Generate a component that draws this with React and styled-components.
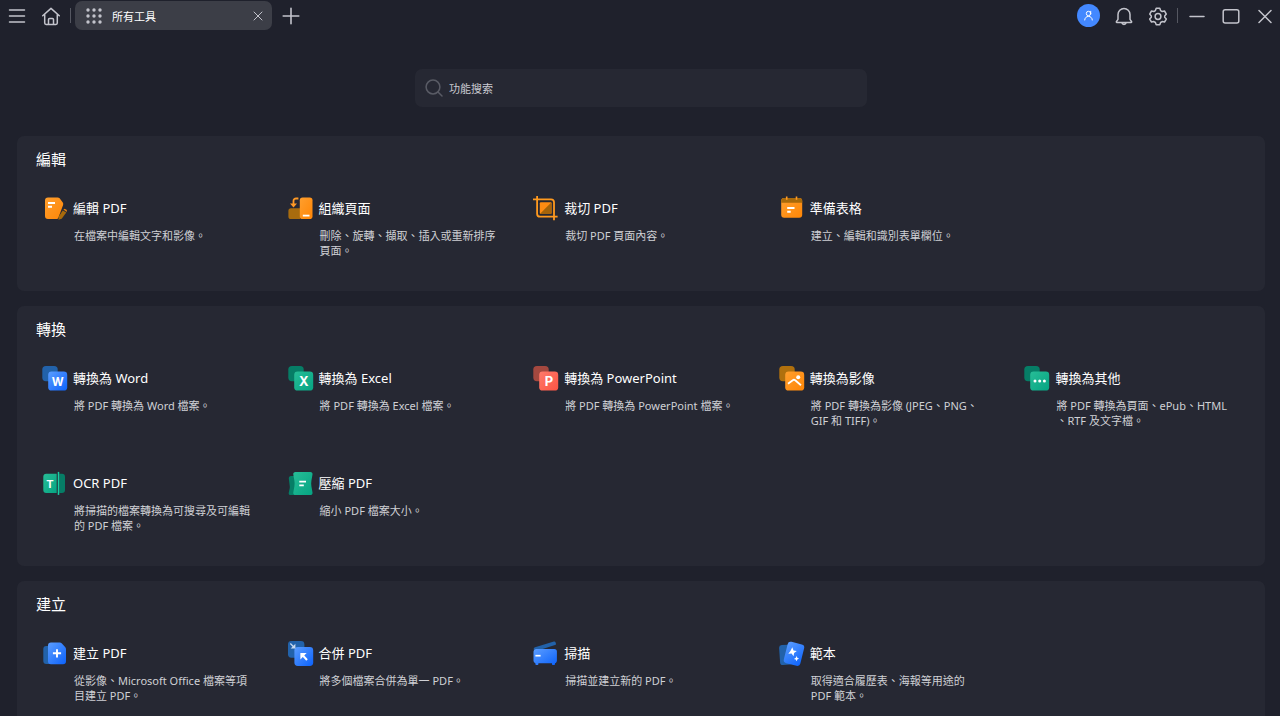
import React from "react";
import styled, { createGlobalStyle } from "styled-components";

const GlobalStyle = createGlobalStyle`
  * {
    box-sizing: border-box;
  }

  body {
    margin: 0;
    background-color: #1f212c;
    color: white;
    font-family: "Noto Sans", "Noto Sans CJK TC", sans-serif;
    font-size: 11px;
  }

  button {
    border: none;
    padding: 0;
    background: none;
    color: inherit;
    font: inherit;
    cursor: pointer;
  }
`;

const Page = styled.div`
  height: 100vh;
  display: flex;
  flex-direction: column;
`;

const TopBar = styled.header`
  display: flex;
  justify-content: space-between;
  align-items: center;
  height: 31px;
  flex-shrink: 0;
  padding: 0 5px 0 7px;
`;

const BarGroup = styled.div`
  display: flex;
  align-items: center;
  gap: ${(props) => props.$gap || 0}px;
`;

const IconButton = styled.button`
  display: flex;
  align-items: center;
  justify-content: center;
  width: 20px;
  height: 23px;
`;

const Divider = styled.span`
  width: 1px;
  height: 15px;
  background-color: #555761;
`;

const Tab = styled.div`
  display: flex;
  align-items: center;
  width: 197px;
  height: 29px;
  margin: 0 9px 0 4px;
  padding: 0 9px 0 11px;
  border-radius: 7px;
  background-color: #3c3e47;
`;

const TabLabel = styled.button`
  display: flex;
  flex: 1;
  align-items: center;
  gap: 10px;
`;

const TabClose = styled.button`
  display: flex;
`;

const Avatar = styled.button`
  display: flex;
  align-items: center;
  justify-content: center;
  width: 23px;
  height: 23px;
  border-radius: 50%;
  background-color: #4388ff;
`;

const Main = styled.main`
  flex: 1;
  min-height: 0;
  overflow-y: auto;
  scrollbar-width: none;
  padding: 38px 15px 15px 17px;
`;

const SearchBox = styled.label`
  display: flex;
  align-items: center;
  gap: 6px;
  width: 452px;
  max-width: 100%;
  height: 38px;
  margin: 0 auto 29px;
  padding: 0 10px;
  border-radius: 7px;
  background-color: #262833;
`;

const SearchInput = styled.input`
  flex: 1;
  min-width: 0;
  border: none;
  outline: none;
  padding: 0;
  background: none;
  color: white;
  font: inherit;

  &::placeholder {
    color: #c9cad0;
    opacity: 1;
  }
`;

const Sections = styled.div`
  display: flex;
  flex-direction: column;
  gap: 15px;
`;

const Panel = styled.section`
  padding: 0 10px;
  border-radius: 7px;
  background-color: #262833;
`;

const PanelTitle = styled.h2`
  height: 50px;
  margin: 0;
  padding: 11px 9px 0;
  font-size: 15px;
  line-height: 24px;
  font-weight: 400;
`;

const ToolGrid = styled.div`
  display: grid;
  grid-template-columns: repeat(5, 1fr);
  grid-auto-rows: 105px;
`;

const Tool = styled.a`
  display: block;
  padding: 10px 0 0 15px;
  color: inherit;
  text-decoration: none;
  white-space: nowrap;
`;

const ToolHead = styled.div`
  display: flex;
  gap: 5px;
  height: 26px;
`;

const ToolName = styled.h3`
  margin: 0;
  font-size: 13px;
  line-height: 24px;
  font-weight: 400;
`;

const ToolText = styled.p`
  margin: 6px 0 0;
  padding-left: 32px;
  color: #cfd0d5;
  line-height: 15px;
  white-space: pre;
`;

const Letter = styled.text`
  fill: white;
  font-family: Inter, sans-serif;
  font-weight: 700;
  text-anchor: middle;
`;

const Gradients = () => (
  <svg width="0" height="0" style={{ display: "block" }} aria-hidden="true">
    <defs>
      <linearGradient id="orange" x1="0" y1="0" x2="1" y2="1">
        <stop offset="0" stopColor="#ff9f2e" />
        <stop offset="1" stopColor="#ff8606" />
      </linearGradient>
      <linearGradient id="blue" x1="0" y1="0" x2="1" y2="1">
        <stop offset="0" stopColor="#5b9dff" />
        <stop offset="1" stopColor="#0c62fb" />
      </linearGradient>
      <linearGradient id="green" x1="0" y1="0" x2="1" y2="1">
        <stop offset="0" stopColor="#27bd97" />
        <stop offset="1" stopColor="#06a482" />
      </linearGradient>
      <linearGradient id="red" x1="0" y1="0" x2="1" y2="1">
        <stop offset="0" stopColor="#ff7a6b" />
        <stop offset="1" stopColor="#fb5443" />
      </linearGradient>
    </defs>
  </svg>
);

const ToolIcon = ({ children }) => (
  <svg width="26" height="26" viewBox="0 0 26 26" fill="none" aria-hidden="true">
    {children}
  </svg>
);

const StackedIcon = ({ back, front, children }) => (
  <ToolIcon>
    <rect x="0.3" y="0" width="15.4" height="15.2" rx="3.6" fill={back} />
    <rect x="6.2" y="5.6" width="19" height="19" rx="3.4" fill={front} />
    {children}
  </ToolIcon>
);

const icons = {
  edit: (
    <ToolIcon>
      <path d="M6 1.4h9.6c.8 0 1.5.3 2 .9l3.2 4.2c.5.7.6 1.6.3 2.4L16.5 21.4c-.4 1-1.2 1.6-2.3 1.6H6a3 3 0 0 1-3-3V4.4a3 3 0 0 1 3-3z" fill="url(#orange)" />
      <path d="M6 7h7M6 10.800h4" stroke="white" strokeWidth="1.900" />
      <path d="M21.400 13.500l1.300-.7 2.200 1.300-.2 2z" fill="#e88411" />
      <path d="M20.800 14.500l3.500 2-4.600 6.300-3.300.9.500-3.500z" fill="#a86a0b" />
    </ToolIcon>
  ),
  organize: (
    <ToolIcon>
      <path d="M3 12.3h9.500V23H3a2.600 2.600 0 0 1-2.600-2.600v-5.500A2.600 2.600 0 0 1 3 12.300z" fill="#a86c0e" />
      <rect x="11.800" y="1.500" width="12.700" height="21.500" rx="2.800" fill="url(#orange)" />
      <path d="M14.800 19.600h6.700" stroke="white" strokeWidth="1.800" />
      <path d="M10.400 2.500H8a2.500 2.500 0 0 0-2.500 2.500v4" stroke="#ff9a26" strokeWidth="1.800" />
      <path d="M2 7.500h7l-3.500 4z" fill="#ff9a26" />
    </ToolIcon>
  ),
  crop: (
    <ToolIcon>
      <path d="M4.100 0v17.700a3 3 0 0 0 3 3h17.500M0 3.300h18a3 3 0 0 1 3 3v17.900" stroke="#ff9a1f" strokeWidth="1.800" />
      <rect x="6.800" y="6.200" width="11.700" height="11.700" rx="1" fill="#ff8c12" />
      <path d="M18.500 6.200v10.700a1 1 0 0 1-1 1H6.800z" fill="#a5640a" />
    </ToolIcon>
  ),
  form: (
    <ToolIcon>
      <rect x="2.200" y="2" width="21" height="19.700" rx="3" fill="url(#orange)" />
      <path d="M2.200 6.800V5a3 3 0 0 1 3-3h15a3 3 0 0 1 3 3v1.800z" fill="#a86a0b" />
      <path d="M7.700.6v3.200M17.500.6v3.200" stroke="#ff9a26" strokeWidth="1.600" />
      <path d="M8.200 12h7.300M8.200 15.700h3.500" stroke="white" strokeWidth="1.900" />
    </ToolIcon>
  ),
  word: (
    <StackedIcon back="#2262aa" front="url(#blue)">
      <Letter x="15.700" y="19.500" fontSize="11.500">W</Letter>
    </StackedIcon>
  ),
  excel: (
    <StackedIcon back="#067d66" front="url(#green)">
      <Letter x="15.700" y="20" fontSize="13">X</Letter>
    </StackedIcon>
  ),
  powerpoint: (
    <StackedIcon back="#a4483f" front="url(#red)">
      <Letter x="16" y="20" fontSize="13">P</Letter>
    </StackedIcon>
  ),
  image: (
    <StackedIcon back="#b0700d" front="url(#orange)">
      <path d="M9 17.700l4.800-3.500c.8-.6 1.600-.6 2.400 0l5.800 5" stroke="white" strokeWidth="1.800" />
      <circle cx="19.200" cy="11.200" r="2" fill="white" />
    </StackedIcon>
  ),
  other: (
    <StackedIcon back="#067d66" front="url(#green)">
      <circle cx="11" cy="15" r="1.500" fill="white" />
      <circle cx="15.700" cy="15" r="1.500" fill="white" />
      <circle cx="20.400" cy="15" r="1.500" fill="white" />
    </StackedIcon>
  ),
  ocr: (
    <ToolIcon>
      <path d="M4.300 2.800h10.400V22H4.300a3 3 0 0 1-3-3V5.800a3 3 0 0 1 3-3z" fill="url(#green)" />
      <path d="M17.300 2.800H20a3 3 0 0 1 3 3V19a3 3 0 0 1-3 3h-2.700z" fill="#067d66" />
      <path d="M16.500.9v23" stroke="#18cda4" strokeWidth="1.500" />
      <Letter x="8" y="16.700" fontSize="11">T</Letter>
    </ToolIcon>
  ),
  compress: (
    <ToolIcon>
      <path d="M3 4.900h7V24H2.500C1.300 24 .5 23 .7 21.900l1-4.600c.2-.9.200-1.700 0-2.600L.8 7.600C.6 6.200 1.600 4.900 3 4.900z" fill="#067d66" />
      <path d="M7.500.9h14.800c1.500 0 2.500 1.200 2.200 2.600l-1.100 6.200c-.3 1.900-.3 3.700 0 5.600l1.100 6.100c.3 1.400-.7 2.600-2.200 2.600H7.500c-1.500 0-2.500-1.200-2.200-2.600l1.100-6.100c.3-1.900.3-3.700 0-5.600L5.300 3.500C5 2.100 6 .9 7.500.9z" fill="url(#green)" />
      <path d="M11.300 10.600H18M11.300 14.300h4.500" stroke="white" strokeWidth="1.800" />
    </ToolIcon>
  ),
  create: (
    <ToolIcon>
      <rect x="1.300" y="5" width="12" height="18" rx="3" fill="#2262aa" />
      <path d="M9 1.600h8.700c.9 0 1.600.3 2.200 1l3.200 3.500c.6.600.9 1.400.9 2.200v12a3 3 0 0 1-3 3H9a3 3 0 0 1-3-3V4.600a3 3 0 0 1 3-3z" fill="url(#blue)" />
      <path d="M15 8.200v8.200M10.900 12.300h8.200" stroke="white" strokeWidth="1.900" />
    </ToolIcon>
  ),
  merge: (
    <ToolIcon>
      <rect x="0" y="0" width="16.400" height="16.700" rx="3.400" fill="#2262aa" />
      <rect x="6.400" y="6" width="18.800" height="19" rx="3.400" fill="url(#blue)" />
      <path d="M2.300 2.500l3.500 3.500" stroke="#c9d9ee" strokeWidth="1.200" />
      <path d="M7.400 2.700v4.900H2.700z" fill="#c9d9ee" />
      <path d="M14 13.500l5 5.500" stroke="white" strokeWidth="2" />
      <path d="M12.400 12h6.200l-6.200 6.400z" fill="white" />
    </ToolIcon>
  ),
  scan: (
    <ToolIcon>
      <path d="M.6 8.400c0-1 .6-1.800 1.500-2.100L20.900.6c.8-.2 1.500.1 1.700.8l.3 1c.2.800-.2 1.500-.9 1.700L5 9.400z" fill="#2262aa" />
      <path d="M3 7.900h18.300a2.600 2.600 0 0 1 2.600 2.600v9.200c0 1.200-.8 2.200-1.900 2.500v.7c0 .6-.5 1-1 1h-1c-.6 0-1-.4-1-1v-.6H5.400v.6c0 .6-.4 1-1 1h-1c-.5 0-1-.4-1-1v-.7A2.600 2.600 0 0 1 .5 19.700v-9.200A2.600 2.600 0 0 1 3 7.900z" fill="url(#blue)" />
      <path d="M2.400 14.700h5.200" stroke="white" strokeWidth="1.700" />
    </ToolIcon>
  ),
  template: (
    <ToolIcon>
      <rect x="0.600" y="3.800" width="12" height="20" rx="2.800" transform="rotate(-4 7 14)" fill="#2262aa" />
      <rect x="6.500" y="1.800" width="17" height="22" rx="3.200" transform="rotate(14 15 12.800)" fill="url(#blue)" />
      <path d="M13.300 6.300l1.200 3.200 3.300.5-2.700 2-.6 3.300-1.900-2.700-3.300.1 2.100-2.600z" fill="white" />
      <path d="M17.800 15l.6 1.900 1.700.7-1.800.8-.7 1.800-.9-1.700-1.800-.5 1.700-1z" fill="white" />
    </ToolIcon>
  ),
};

const sections = [
  {
    title: "編輯",
    tools: [
      { icon: "edit", name: "編輯 PDF", text: "在檔案中編輯文字和影像。" },
      { icon: "organize", name: "組織頁面", text: "刪除、旋轉、擷取、插入或重新排序\n頁面。" },
      { icon: "crop", name: "裁切 PDF", text: "裁切 PDF 頁面內容。" },
      { icon: "form", name: "準備表格", text: "建立、編輯和識別表單欄位。" },
    ],
  },
  {
    title: "轉換",
    tools: [
      { icon: "word", name: "轉換為 Word", text: "將 PDF 轉換為 Word 檔案。" },
      { icon: "excel", name: "轉換為 Excel", text: "將 PDF 轉換為 Excel 檔案。" },
      { icon: "powerpoint", name: "轉換為 PowerPoint", text: "將 PDF 轉換為 PowerPoint 檔案。" },
      { icon: "image", name: "轉換為影像", text: "將 PDF 轉換為影像 (JPEG、PNG、\nGIF 和 TIFF)。" },
      { icon: "other", name: "轉換為其他", text: "將 PDF 轉換為頁面、ePub、HTML\n、RTF 及文字檔。" },
      { icon: "ocr", name: "OCR PDF", text: "將掃描的檔案轉換為可搜尋及可編輯\n的 PDF 檔案。" },
      { icon: "compress", name: "壓縮 PDF", text: "縮小 PDF 檔案大小。" },
    ],
  },
  {
    title: "建立",
    tools: [
      { icon: "create", name: "建立 PDF", text: "從影像、Microsoft Office 檔案等項\n目建立 PDF。" },
      { icon: "merge", name: "合併 PDF", text: "將多個檔案合併為單一 PDF。" },
      { icon: "scan", name: "掃描", text: "掃描並建立新的 PDF。" },
      { icon: "template", name: "範本", text: "取得適合履歷表、海報等用途的\nPDF 範本。" },
    ],
  },
];

const LineIcon = ({ size = 20, width = 1.5, color = "#c3c4cc", children }) => (
  <svg
    width={size}
    height={size}
    viewBox={`0 0 ${size} ${size}`}
    fill="none"
    stroke={color}
    strokeWidth={width}
    strokeLinecap="round"
    strokeLinejoin="round"
    aria-hidden="true"
  >
    {children}
  </svg>
);

const LeftGroup = styled(BarGroup)`
  margin-right: 9px;
`;

const Header = () => (
  <TopBar>
    <BarGroup>
      <LeftGroup $gap={14}>
        <IconButton aria-label="選單">
          <LineIcon>
            <path d="M2.500 4h15M2.500 10h15M2.500 16h15" />
          </LineIcon>
        </IconButton>
        <IconButton aria-label="首頁">
          <LineIcon>
            <path d="M1.700 9.800L10 2.400l8.300 7.400M3.700 8.500V17c0 .8.600 1.400 1.400 1.400h9.800c.8 0 1.400-.6 1.400-1.400V8.500M7.500 18v-4.500c0-.6.500-1 1-1h3c.6 0 1 .5 1 1V18" />
          </LineIcon>
        </IconButton>
      </LeftGroup>
      <Divider />
      <Tab>
        <TabLabel>
          <svg width="16" height="16" viewBox="0 0 16 16" fill="#c3c4cc" aria-hidden="true">
            {[2, 8, 14].map((y) =>
              [2, 8, 14].map((x) => <circle key={`${x}-${y}`} cx={x} cy={y} r="1.700" />)
            )}
          </svg>
          所有工具
        </TabLabel>
        <TabClose aria-label="關閉分頁">
          <LineIcon size={10} width={1}>
            <path d="M1 1l8 8M9 1l-8 8" />
          </LineIcon>
        </TabClose>
      </Tab>
      <IconButton aria-label="新增分頁">
        <LineIcon width={1.6}>
          <path d="M10 2.300v15.500M2.200 10h15.600" />
        </LineIcon>
      </IconButton>
    </BarGroup>

    <BarGroup $gap={9}>
      <BarGroup $gap={14}>
        <Avatar aria-label="帳戶">
          <LineIcon size={11} width={1} color="white">
            <circle cx="5.500" cy="3.500" r="2.200" />
            <path d="M1.700 10c0-2 1.600-3.600 3.800-3.600S9.300 8 9.300 10M7.700 1.300V4" />
          </LineIcon>
        </Avatar>
        <IconButton aria-label="通知">
          <LineIcon>
            <path d="M10 2.500a6 6 0 0 0-6 6v4.800l-1.600 2.400c-.2.300 0 .7.400.7h14.400c.4 0 .6-.4.400-.7L16 13.300V8.500a6 6 0 0 0-6-6zM7.800 16.800a2.300 2.300 0 0 0 4.400 0" />
          </LineIcon>
        </IconButton>
        <IconButton aria-label="設定">
          <LineIcon>
            <path d="M8.200 2.300h3.600l.8 2.300 1.500.9 2.400-.5 1.800 3.100-1.600 1.800v1.300l1.600 1.800-1.800 3.100-2.400-.5-1.500.9-.8 2.200H8.200l-.8-2.200-1.500-.9-2.400.5L1.700 13l1.600-1.800V9.900L1.700 8.100 3.500 5l2.400.5 1.500-.9z" />
            <circle cx="10" cy="10.500" r="2.900" />
          </LineIcon>
        </IconButton>
      </BarGroup>
      <Divider />
      <BarGroup $gap={14}>
        <IconButton aria-label="最小化">
          <LineIcon>
            <path d="M3 10.500h14" />
          </LineIcon>
        </IconButton>
        <IconButton aria-label="最大化">
          <LineIcon>
            <rect x="2.200" y="3.800" width="15.600" height="13.200" rx="2" />
          </LineIcon>
        </IconButton>
        <IconButton aria-label="關閉">
          <LineIcon>
            <path d="M4 4.500l12 12M16 4.500l-12 12" />
          </LineIcon>
        </IconButton>
      </BarGroup>
    </BarGroup>
  </TopBar>
);

const Section = ({ title, tools }) => (
  <Panel>
    <PanelTitle>{title}</PanelTitle>
    <ToolGrid>
      {tools.map((tool) => (
        <Tool href="#" key={tool.name}>
          <ToolHead>
            {icons[tool.icon]}
            <ToolName>{tool.name}</ToolName>
          </ToolHead>
          <ToolText>{tool.text}</ToolText>
        </Tool>
      ))}
    </ToolGrid>
  </Panel>
);

const App = () => (
  <Page lang="zh-Hant">
    <GlobalStyle />
    <Gradients />
    <Header />
    <Main>
      <SearchBox>
        <LineIcon size={18} color="#595b65">
          <circle cx="8" cy="8" r="6.900" />
          <path d="M13 13l4 4" />
        </LineIcon>
        <SearchInput type="text" placeholder="功能搜索" aria-label="功能搜索" />
      </SearchBox>
      <Sections>
        {sections.map((section) => (
          <Section key={section.title} title={section.title} tools={section.tools} />
        ))}
      </Sections>
    </Main>
  </Page>
);

export default App;
